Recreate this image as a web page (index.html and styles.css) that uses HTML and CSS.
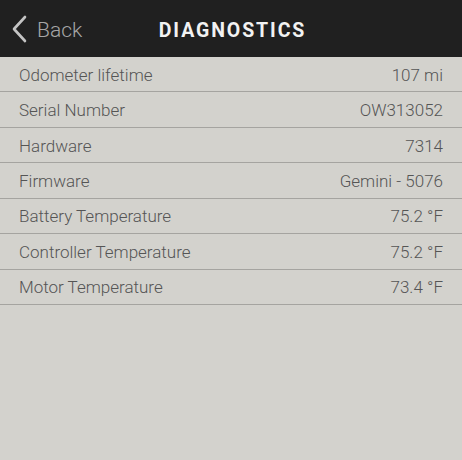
FILE: index.html
```html
<!DOCTYPE html>
<html>
<head>
<meta charset="utf-8">
<link rel="stylesheet" href="styles.css">
</head>
<body>
<header class="topbar">
  <div class="back">
    <svg class="chev" width="18" height="28" viewBox="0 0 18 28"><path d="M15 2 L4 14 L15 26" fill="none" stroke="#c4c4c4" stroke-width="2.6" stroke-linecap="round" stroke-linejoin="round"/></svg>
    <span class="back-label">Back</span>
  </div>
  <h1 class="title">DIAGNOSTICS</h1>
</header>
<ul class="list">
  <li class="row"><span class="label">Odometer lifetime</span><span class="value">107 mi</span></li>
  <li class="row"><span class="label">Serial Number</span><span class="value">OW313052</span></li>
  <li class="row"><span class="label">Hardware</span><span class="value">7314</span></li>
  <li class="row"><span class="label">Firmware</span><span class="value">Gemini - 5076</span></li>
  <li class="row"><span class="label">Battery Temperature</span><span class="value">75.2 °F</span></li>
  <li class="row"><span class="label">Controller Temperature</span><span class="value">75.2 °F</span></li>
  <li class="row"><span class="label">Motor Temperature</span><span class="value">73.4 °F</span></li>
</ul>
</body>
</html>
```
FILE: styles.css
```css
html, body {
  margin: 0;
  padding: 0;
  background: #d3d2cd;
  font-family: Roboto, "Liberation Sans", sans-serif;
}
.topbar {
  height: 57px;
  background: #202020;
  display: grid;
  grid-template-columns: 1fr auto 1fr;
  align-items: center;
  box-sizing: border-box;
}
.back {
  display: flex;
  align-items: center;
  padding-left: 10px;
  gap: 9px;
}
.chev {
  display: block;
}
.back-label {
  color: #a6a6a6;
  font-size: 21px;
  font-weight: 300;
  padding-top: 2px;
}
.title {
  margin: 0;
  color: #f2f2f2;
  font-size: 19.5px;
  font-weight: 700;
  letter-spacing: 1.9px;
  padding-left: 3px;
  padding-top: 3px;
}
.list {
  list-style: none;
  margin: 0;
  padding: 0;
}
.row {
  box-sizing: border-box;
  height: 35.43px;
  border-bottom: 1px solid #a5a4a0;
  display: flex;
  align-items: center;
  justify-content: space-between;
  padding: 1px 19px 0;
  color: #555555;
  font-size: 17px;
  font-weight: 300;
}
```
